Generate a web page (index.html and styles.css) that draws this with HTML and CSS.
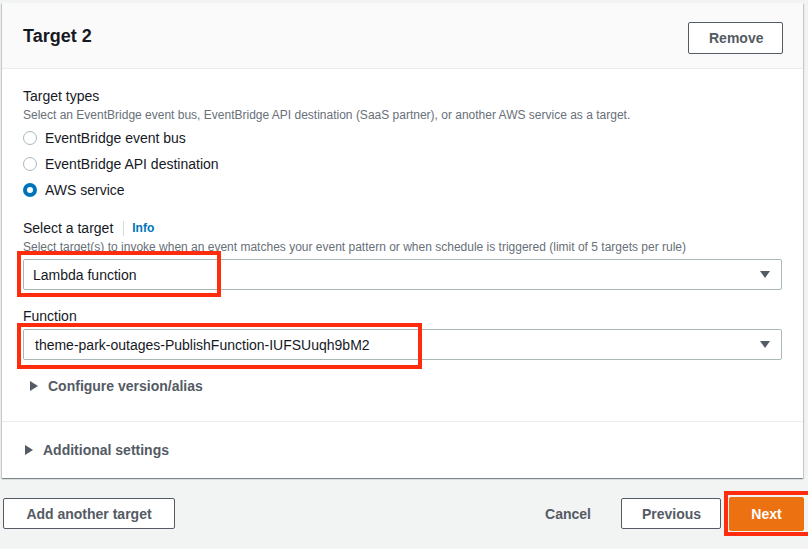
FILE: index.html
```html
<!DOCTYPE html>
<html lang="en">
<head>
<meta charset="utf-8">
<title>Target 2</title>
<link rel="stylesheet" href="styles.css">
</head>
<body>
<div class="page">
  <section class="card">
    <header class="card-header">
      <h2 class="card-title">Target 2</h2>
      <button class="btn">Remove</button>
    </header>
    <div class="card-body">
      <div class="label">Target types</div>
      <div class="desc">Select an EventBridge event bus, EventBridge API destination (SaaS partner), or another AWS service as a target.</div>
      <div class="radios">
        <label class="radio"><span class="radio-dot"></span>EventBridge event bus</label>
        <label class="radio"><span class="radio-dot"></span>EventBridge API destination</label>
        <label class="radio"><span class="radio-dot checked"></span>AWS service</label>
      </div>

      <div class="label label-target">Select a target<span class="sep"></span><a class="info">Info</a></div>
      <div class="desc">Select target(s) to invoke when an event matches your event pattern or when schedule is triggered (limit of 5 targets per rule)</div>
      <div class="select select-target">
        <span>Lambda function</span>
        <span class="caret"></span>
        <span class="highlight hl-1"></span>
      </div>

      <div class="label label-function">Function</div>
      <div class="select select-function">
        <span>theme-park-outages-PublishFunction-IUFSUuqh9bM2</span>
        <span class="caret"></span>
        <span class="highlight hl-2"></span>
      </div>

      <div class="expander expander-config"><span class="tri"></span>Configure version/alias</div>
    </div>
    <div class="card-footer">
      <div class="expander"><span class="tri"></span>Additional settings</div>
    </div>
  </section>

  <div class="actions">
    <button class="btn btn-add">Add another target</button>
    <div class="actions-right">
      <button class="btn-link">Cancel</button>
      <button class="btn btn-prev">Previous</button>
      <button class="btn-primary">Next<span class="highlight hl-3"></span></button>
    </div>
  </div>
</div>
</body>
</html>
```

FILE: styles.css
```css
* { box-sizing: border-box; }
html, body { margin: 0; padding: 0; }
body {
  background: #f2f3f3;
  font-family: "Liberation Sans", Arial, sans-serif;
  color: #16191f;
  width: 808px;
  height: 549px;
  overflow: hidden;
}
.page {
  padding: 3px 5px 0 2px;
}
.card {
  background: #fff;
  box-shadow: 0 1px 1px 0 rgba(0, 28, 36, 0.3), 1px 1px 1px 0 rgba(0, 28, 36, 0.15), -1px 1px 1px 0 rgba(0, 28, 36, 0.15);
}
.card-header {
  height: 66px;
  background: #fafafa;
  border-bottom: 1px solid #eaeded;
  display: flex;
  align-items: center;
  justify-content: space-between;
  padding: 0 20px 0 21px;
}
.card-title {
  margin: 0;
  font-size: 18px;
  font-weight: 700;
  color: #16191f;
  line-height: 22px;
  padding-top: 0;
}
.btn {
  font-family: "Liberation Sans", Arial, sans-serif;
  background: #fff;
  border: 1px solid #545b64;
  border-radius: 2px;
  color: #545b64;
  font-weight: 700;
  font-size: 14px;
  height: 32px;
  padding: 0 20px;
  cursor: pointer;
}
.card-header .btn { width: 95px; margin-top: 5px; }
.card-body {
  padding: 17px 21px 25px 21px;
}
.label {
  font-size: 14px;
  line-height: 20px;
  color: #16191f;
}
.desc {
  font-size: 12px;
  line-height: 16px;
  color: #687078;
  margin-top: 1px;
}
.radios {
  margin-top: 2px;
}
.radio {
  display: flex;
  align-items: center;
  height: 26px;
  font-size: 14px;
  color: #16191f;
}
.radio-dot {
  width: 14px;
  height: 14px;
  border-radius: 50%;
  border: 1.5px solid #aab7b8;
  margin: 0 8px 0 0;
  flex: none;
  background: #fff;
}
.radio-dot.checked {
  border: 4px solid #0073bb;
  background: #fff;
}
.label-target {
  margin-top: 15px;
  display: flex;
  align-items: center;
}
.sep {
  display: inline-block;
  width: 1px;
  height: 15px;
  background: #d5dbdb;
  margin: 0 8px 0 10px;
}
.info {
  color: #0073bb;
  font-weight: 700;
  font-size: 12px;
}
.select {
  position: relative;
  height: 31px;
  border: 1px solid #aab7b8;
  border-radius: 2px;
  display: flex;
  align-items: center;
  justify-content: space-between;
  padding: 0 11px 0 9px;
  font-size: 14px;
  color: #16191f;
  background: #fff;
}
.select-target { margin-top: 4px; }
.select-function { margin-top: 3px; padding-left: 11px; }
.caret {
  width: 0;
  height: 0;
  border-left: 5px solid transparent;
  border-right: 5px solid transparent;
  border-top: 7px solid #545b64;
}
.highlight {
  position: absolute;
  border: 4px solid #ff2d0d;
  pointer-events: none;
}
.hl-1 { left: -7px; top: -9px; width: 204px; height: 46px; }
.hl-2 { left: -7px; top: -7px; width: 405px; height: 46px; }
.label-function { margin-top: 16px; }
.expander {
  display: flex;
  align-items: center;
  font-size: 14px;
  font-weight: 700;
  color: #545b64;
  line-height: 20px;
}
.tri {
  width: 0;
  height: 0;
  border-top: 5px solid transparent;
  border-bottom: 5px solid transparent;
  border-left: 8px solid #545b64;
  margin-right: 10px;
}
.expander-config {
  margin-top: 16px;
  padding-left: 7px;
}
.card-footer {
  border-top: 1px solid #eaeded;
  height: 57px;
  padding: 0 23px;
  display: flex;
  align-items: center;
}
.actions {
  margin-top: 20px;
  display: flex;
  align-items: flex-start;
  justify-content: space-between;
  padding-left: 1px;
  margin-right: -1px;
}
.btn-add { width: 172px; height: 31px; }
.actions-right {
  display: flex;
  align-items: flex-start;
  gap: 8px;
}
.btn-link {
  font-family: "Liberation Sans", Arial, sans-serif;
  background: none;
  border: none;
  color: #545b64;
  font-weight: 700;
  font-size: 14px;
  height: 31px;
  padding: 0 22px;
}
.btn-prev { width: 100px; height: 31px; }
.btn-primary {
  position: relative;
  font-family: "Liberation Sans", Arial, sans-serif;
  background: #ec7211;
  border: 1px solid #ec7211;
  border-radius: 2px;
  color: #fff;
  font-weight: 700;
  font-size: 14px;
  width: 75px;
  height: 34px;
  margin-top: -1px;
  padding: 0;
}
.hl-3 { left: -6px; top: -7px; width: 90px; height: 45px; }
```
